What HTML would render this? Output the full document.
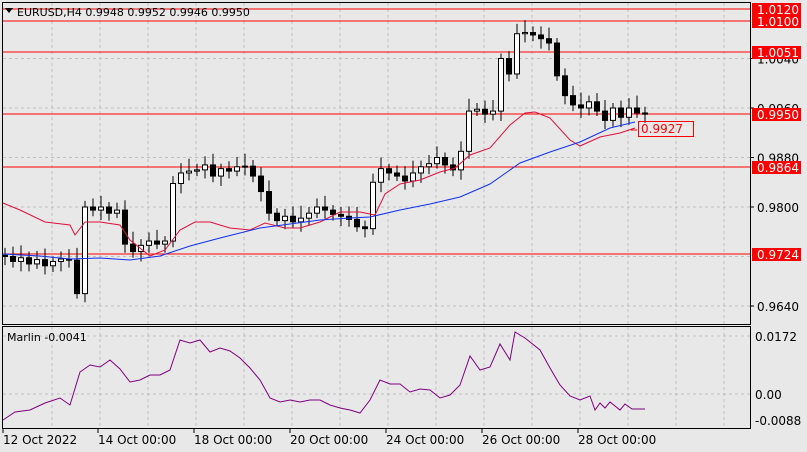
<!DOCTYPE html>
<html><head><meta charset="utf-8"><style>
body{margin:0;background:#e8e8e8;width:807px;height:452px;overflow:hidden}
svg{display:block;font-family:Tahoma,"DejaVu Sans","Liberation Sans",sans-serif;font-size:12px}
</style></head><body>
<svg id="s" width="807" height="452" xmlns="http://www.w3.org/2000/svg"></svg>
<script>
const s=document.getElementById('s');let h='';
const Y=p=>306-(p-0.964)*6187.5;
h+='<rect width="807" height="452" fill="#e8e8e8"/>';
for(let x=52;x<750;x+=48){h+=`<line x1="${x}" y1="3" x2="${x}" y2="324" stroke="#c0c0c0" stroke-dasharray="3,3"/><line x1="${x}" y1="327" x2="${x}" y2="428" stroke="#c0c0c0" stroke-dasharray="3,3"/>`;}
[0.964,0.972,0.98,0.988,0.996,1.004,1.012].forEach(p=>{const y=Y(p);h+=`<line x1="3" y1="${y}" x2="750" y2="${y}" stroke="#c0c0c0" stroke-dasharray="3,3"/>`});
[336,394].forEach(y=>h+=`<line x1="3" y1="${y}" x2="750" y2="${y}" stroke="#c0c0c0" stroke-dasharray="3,3"/>`);
[[0.964,'0.9640'],[0.98,'0.9800'],[0.988,'0.9880'],[0.996,'0.9960'],[1.004,'1.0040']].forEach(a=>{const y=Y(a[0]);h+=`<line x1="750" y1="${y}" x2="754" y2="${y}" stroke="#000"/><text x="757" y="${y+5}" fill="#000">${a[1]}</text>`});
[[1.012,'1.0120'],[1.01,'1.0100'],[1.0051,'1.0051'],[0.995,'0.9950'],[0.9864,'0.9864'],[0.9724,'0.9724']].forEach(a=>{const y=Math.round(Y(a[0]));h+=`<line x1="3" y1="${y}" x2="750" y2="${y}" stroke="#f00"/><rect x="752" y="${y-6}" width="49" height="13" fill="#f00"/><text x="757" y="${y+5}" fill="#fff">${a[1]}</text>`});
const c=[0.9722,0.9720,0.9712,0.9718,0.9708,0.9715,0.9705,0.9712,0.9716,0.9714,0.9660,0.9800,0.9795,0.9800,0.9790,0.9795,0.9740,0.9728,0.9738,0.9745,0.9740,0.9745,0.9838,0.9855,0.9858,0.9860,0.9868,0.9850,0.9862,0.9858,0.9865,0.9866,0.9850,0.9825,0.9790,0.9778,0.9785,0.9776,0.9782,0.9790,0.9800,0.9795,0.9788,0.9785,0.9780,0.9768,0.9765,0.9840,0.9862,0.9855,0.9850,0.9842,0.9855,0.9865,0.9870,0.9880,0.9868,0.9860,0.9890,0.9955,0.9958,0.9950,0.9955,1.0040,1.0015,1.0080,1.0082,1.0078,1.0072,1.0065,1.0012,0.9980,0.9965,0.9960,0.9970,0.9955,0.9940,0.9960,0.9945,0.9960,0.9952,0.9950];
for(let i=1;i<c.length;i++){const x=5+8*(i-1),o=c[i-1],cl=c[i];const hi=Math.max(o,cl)+0.0008+((i*37)%7)*0.0002,lo=Math.min(o,cl)-0.0008-((i*53)%5)*0.0002;
h+=`<line x1="${x}" y1="${Y(hi)}" x2="${x}" y2="${Y(lo)}" stroke="#000"/>`;
const t=Y(Math.max(o,cl)),b=Y(Math.min(o,cl));const hh=Math.max(1,b-t);
h+=`<rect x="${x-2.5}" y="${t}" width="5" height="${hh}" fill="${cl>=o?'#fff':'#000'}" stroke="#000"/>`;}
const pl=(pts,col)=>h+=`<polyline fill="none" stroke="${col}" stroke-width="1" points="${pts}"/>`;
pl("3,203 20,210 45,222 70,225 75,235 85,222 100,222 120,225 130,240 150,256 165,250 180,230 195,222 210,222 230,228 250,230 265,223 285,228 300,228 320,222 340,212 360,212 375,215 385,194 400,184 420,180 440,172 455,168 470,155 490,148 510,125 525,113 535,112 550,118 570,140 580,146 600,137 620,133 635,128","#e0103a");
pl("3,254 40,256 70,259 100,258 130,260 160,256 190,246 220,238 260,228 290,224 320,220 350,218 370,217 400,210 430,204 460,197 490,184 520,163 550,152 580,142 610,128 635,122","#1030f0");
h+='<line x1="631" y1="130" x2="637" y2="130" stroke="#f00"/><rect x="638.5" y="121.5" width="55" height="15" fill="none" stroke="#f00"/><text x="641" y="133" fill="#f00">0.9927</text>';
pl("3,420 15,412 30,410 45,403 60,398 70,405 80,372 90,365 100,367 110,360 120,369 130,382 140,380 150,375 160,375 170,370 180,340 190,343 200,340 210,352 220,348 230,351 240,358 250,368 260,380 270,398 280,402 290,400 300,402 310,400 320,400 330,405 340,408 350,410 360,413 370,400 380,380 390,384 400,384 410,392 420,389 430,390 440,398 450,395 460,385 470,356 480,370 490,367 500,344 510,360 515,332 525,338 540,350 550,368 560,385 570,396 580,400 590,396 595,410 600,403 605,408 610,402 620,410 625,404 632,409 645,409","#800080");
[[336,'0.0172'],[394,'0.00'],[420,'-0.0088']].forEach(a=>h+=`<text x="755" y="${a[0]+5}" fill="#000">${a[1]}</text>`);
h+='<text x="7" y="341" fill="#000" font-size="11">Marlin -0.0041</text>';
h+='<rect x="2.5" y="2.5" width="748" height="322" fill="none" stroke="#000"/><rect x="2.5" y="326.5" width="748" height="102" fill="none" stroke="#000"/>';
h+='<path d="M5 8 L13 8 L9 13 Z" fill="#000"/><text x="17" y="16" fill="#000" font-size="11">EURUSD,H4  0.9948 0.9952 0.9946 0.9950</text>';
[[3,'12 Oct 2022'],[98,'14 Oct 00:00'],[194,'18 Oct 00:00'],[290,'20 Oct 00:00'],[386,'24 Oct 00:00'],[482,'26 Oct 00:00'],[578,'28 Oct 00:00']].forEach(a=>h+=`<line x1="${a[0]}" y1="429" x2="${a[0]}" y2="433" stroke="#000"/><text x="${a[0]}" y="444" fill="#000">${a[1]}</text>`);
s.innerHTML=h;
</script>
</body></html>
